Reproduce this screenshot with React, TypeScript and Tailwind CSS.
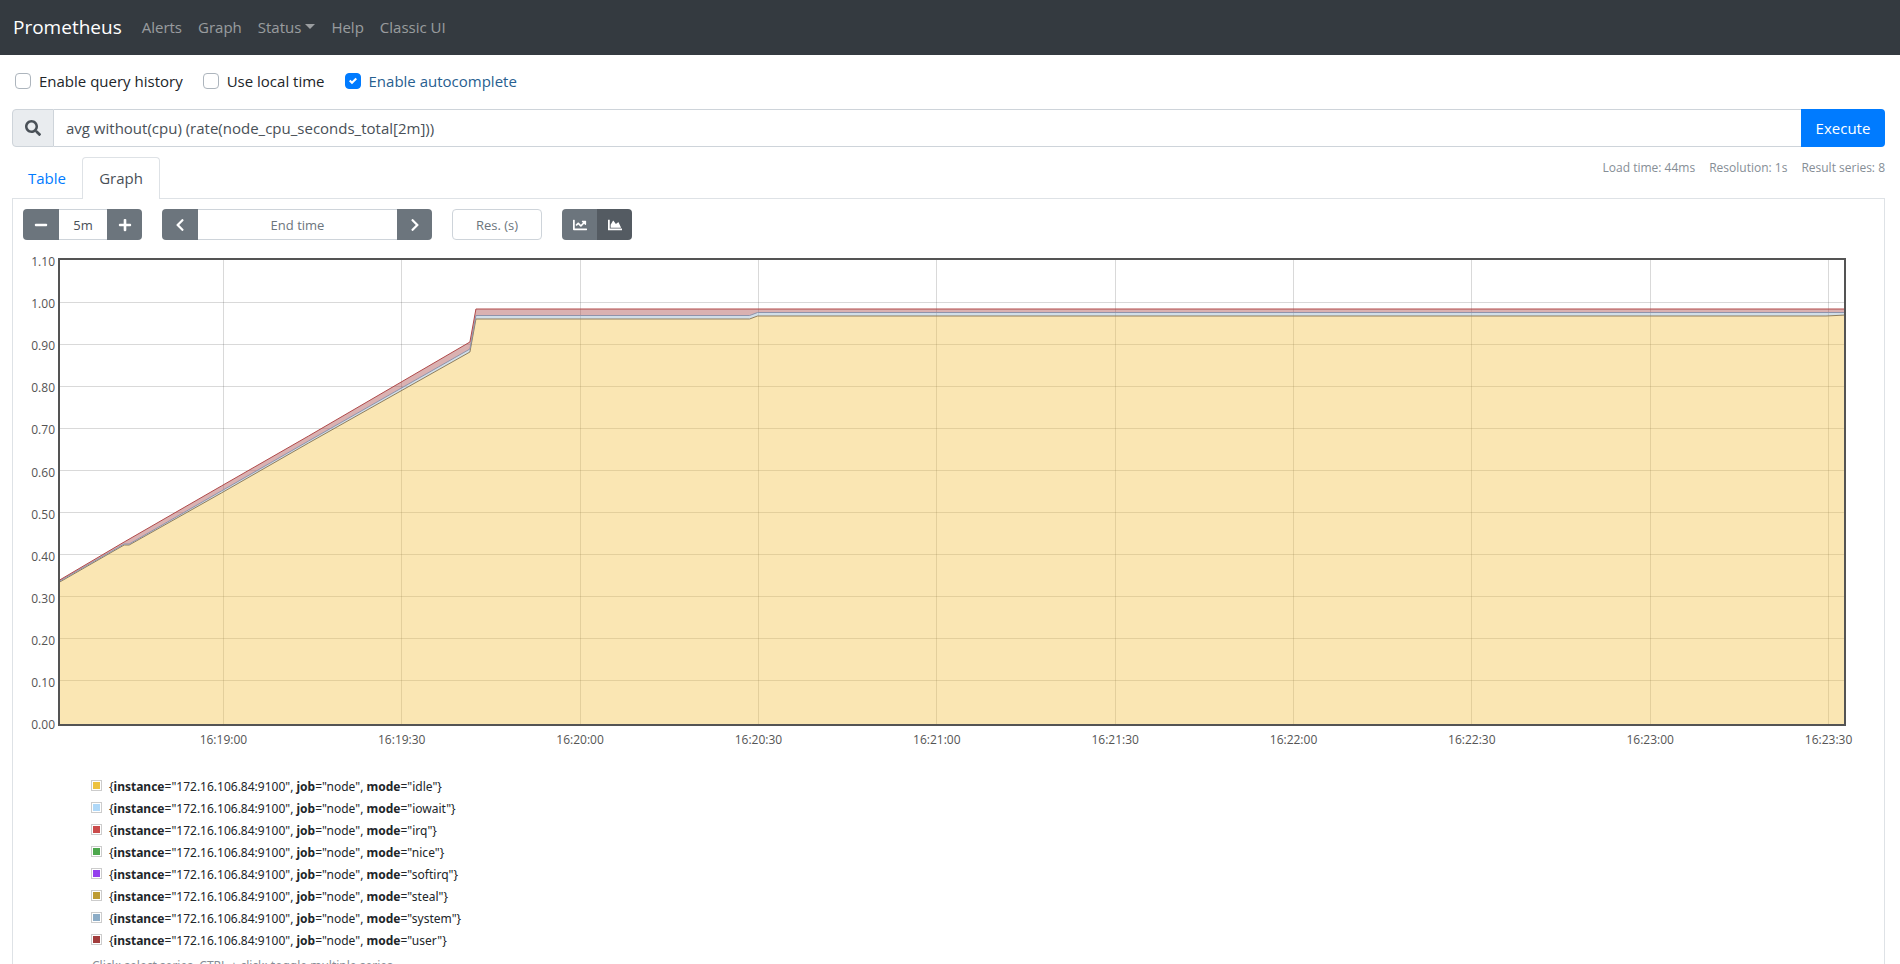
import React from 'react';
import { FaSearch, FaPlus, FaMinus, FaChevronLeft, FaChevronRight, FaChartLine, FaChartArea } from 'react-icons/fa';

const series = [
  { mode: 'idle', color: '#edc240' },
  { mode: 'iowait', color: '#afd8f8' },
  { mode: 'irq', color: '#cb4b4b' },
  { mode: 'nice', color: '#4da74d' },
  { mode: 'softirq', color: '#9440ed' },
  { mode: 'steal', color: '#bd9b33' },
  { mode: 'system', color: '#8cacc6' },
  { mode: 'user', color: '#a23c3c' },
];

const times = ['16:19:00', '16:19:30', '16:20:00', '16:20:30', '16:21:00', '16:21:30', '16:22:00', '16:22:30', '16:23:00', '16:23:30'];
const values = ['1.10', '1.00', '0.90', '0.80', '0.70', '0.60', '0.50', '0.40', '0.30', '0.20', '0.10', '0.00'];

// Plot coordinates, on a 1784 x 464 canvas
const idle = '0,323 66,285 71,285 163,233 250,183 411,92 417,59 690,59 698,56 1764,56 1784,55';
const iowaitTop = '0,322 66,284 71,284 163,231 250,181 411,89 417,55.5 690,55.5 698,52.5 1784,52.5';
const userTop = '0,321 66,282 163,226 250,176 411,82 417,49 1784,49';

const reverse = (points: string) => points.split(' ').reverse().join(' ');

const Checkbox = ({ id, label, checked = false }: { id: string; label: string; checked?: boolean }) => (
  <div className="flex items-center gap-2">
    <span className="relative flex">
      <input
        type="checkbox"
        id={id}
        defaultChecked={checked}
        className="peer size-4 appearance-none rounded border border-[#adb5bd] bg-white checked:border-[#007bff] checked:bg-[#007bff]"
      />
      <svg viewBox="0 0 8 8" className="pointer-events-none absolute top-1 left-1 hidden size-2 peer-checked:block">
        <path fill="#fff" d="M6.564.75l-3.59 3.612-1.538-1.55L0 4.26l2.974 2.99L8 2.193z" />
      </svg>
    </span>
    <label htmlFor={id} className={checked ? 'text-[#286090]' : ''}>
      {label}
    </label>
  </div>
);

const Chart: React.FC = () => (
  <svg className="block h-[468px] w-full overflow-visible text-[12px]" fill="#545454">
    {values.map((value, i) => (
      <text key={value} x={-3} y={8 + i * 42.1} textAnchor="end">
        {value}
      </text>
    ))}
    {times.map((time, i) => (
      <text key={time} x={`${9.25 + i * 9.975}%`} y={486} textAnchor="middle">
        {time}
      </text>
    ))}
    <g stroke="#545454" strokeOpacity={0.22} shapeRendering="crispEdges">
      {times.map((time, i) => (
        <line key={time} x1={`${9.25 + i * 9.975}%`} x2={`${9.25 + i * 9.975}%`} y1={2} y2={466} />
      ))}
      {values.slice(1, -1).map((value, i) => (
        <line key={value} x1="0" x2="100%" y1={44 + i * 42.1} y2={44 + i * 42.1} />
      ))}
    </g>
    <svg y={2} width="100%" height={464} viewBox="0 0 1784 464" preserveAspectRatio="none" fill="none">
      <polygon points={`${idle} 1784,464 0,464`} fill="#f2c040" fillOpacity={0.4} />
      <polygon points={`${iowaitTop} ${reverse(idle)}`} fill="#8cacc6" fillOpacity={0.4} />
      <polygon points={`${userTop} ${reverse(iowaitTop)}`} fill="#a23c3c" fillOpacity={0.4} />
      <polyline points={idle} stroke="#8f7d5c" vectorEffect="non-scaling-stroke" />
      <polyline points={iowaitTop} stroke="#8f93ab" vectorEffect="non-scaling-stroke" />
      <polyline points={userTop} stroke="#b04a4a" vectorEffect="non-scaling-stroke" />
    </svg>
    <g stroke="#545454" strokeWidth={2}>
      <line x1="0" x2="100%" y1={1} y2={1} />
      <line x1="0" x2="100%" y1={467} y2={467} />
      <line x1={1} x2={1} y1={0} y2={468} />
      <svg x="100%" overflow="visible">
        <line x1={-1} x2={-1} y1={0} y2={468} />
      </svg>
    </g>
  </svg>
);

const App: React.FC = () => {
  return (
    <div className="min-h-screen bg-white font-['Open_Sans','Noto_Sans',sans-serif] text-[15px] leading-6 text-[#212529]">
      <nav className="flex h-[55px] items-center bg-[#343a40] px-[13px] pb-[2px]">
        <a href="#" className="mr-5 text-[19px] text-white">Prometheus</a>
        <div className="flex items-center gap-4 text-white/50">
          <a href="#">Alerts</a>
          <a href="#">Graph</a>
          <button type="button" className="flex items-center gap-1">
            Status
            <span className="border-x-5 border-t-5 border-x-transparent border-t-current" />
          </button>
          <a href="#">Help</a>
          <a href="#">Classic UI</a>
        </div>
      </nav>

      <main className="pt-[14px] pr-[15px] pl-3">
        <div className="flex gap-5 px-[3px]">
          <Checkbox id="query-history" label="Enable query history" />
          <Checkbox id="local-time" label="Use local time" />
          <Checkbox id="autocomplete" label="Enable autocomplete" checked />
        </div>

        <div className="mt-4 flex h-[38px]">
          <span className="flex w-[42px] items-center justify-center rounded-l border border-[#ced4da] bg-[#e9ecef] text-[#495057]">
            <FaSearch className="size-4" />
          </span>
          <input
            type="text"
            aria-label="Expression"
            defaultValue="avg without(cpu) (rate(node_cpu_seconds_total[2m]))"
            className="min-w-0 flex-1 border-y border-[#ced4da] px-3 text-[#495057]"
          />
          <button type="button" className="w-[84px] rounded-r bg-[#007bff] text-white">Execute</button>
        </div>

        <div className="mt-[10px] flex items-start justify-between">
          <div className="flex">
            <button type="button" className="h-[41px] w-[70px] text-[#007bff]">Table</button>
            <button type="button" className="relative z-10 -mb-px h-[42px] w-[78px] rounded-t border border-b-0 border-[#dee2e6] bg-white pb-px text-[#495057]">
              Graph
            </button>
          </div>
          <div className="flex gap-[14px] text-[12px] leading-[22px] text-[#868e96]">
            <span>Load time: 44ms</span>
            <span>Resolution: 1s</span>
            <span>Result series: 8</span>
          </div>
        </div>

        <div className="border border-[#dee2e6] px-[10px] pt-[10px]">
          <div className="flex h-[31px] gap-5 text-[13px]">
            <div className="flex">
              <button type="button" aria-label="Decrease range" className="flex w-9 items-center justify-center rounded-l bg-[#6c757d] text-white">
                <FaMinus className="size-[14px]" />
              </button>
              <input type="text" aria-label="Range" defaultValue="5m" className="w-12 border-y border-[#ced4da] text-center text-[#495057]" />
              <button type="button" aria-label="Increase range" className="flex w-[35px] items-center justify-center rounded-r bg-[#6c757d] text-white">
                <FaPlus className="size-[14px]" />
              </button>
            </div>
            <div className="flex">
              <button type="button" aria-label="Earlier" className="flex w-9 items-center justify-center rounded-l bg-[#6c757d] text-white">
                <FaChevronLeft className="size-[14px]" />
              </button>
              <input type="text" aria-label="End time" placeholder="End time" className="w-[199px] border-y border-[#ced4da] text-center placeholder:text-[#6c757d]" />
              <button type="button" aria-label="Later" className="flex w-[35px] items-center justify-center rounded-r bg-[#6c757d] text-white">
                <FaChevronRight className="size-[14px]" />
              </button>
            </div>
            <input type="text" aria-label="Resolution" placeholder="Res. (s)" className="w-[90px] rounded border border-[#ced4da] text-center placeholder:text-[#6c757d]" />
            <div className="flex text-white">
              <button type="button" aria-label="Line graph" className="flex w-[35px] items-center justify-center rounded-l bg-[#6c757d]">
                <FaChartLine className="size-[14px]" />
              </button>
              <button type="button" aria-label="Stacked graph" className="flex w-[35px] items-center justify-center rounded-r bg-[#545b62]">
                <FaChartArea className="size-[14px]" />
              </button>
            </div>
          </div>

          <div className="mt-[18px] pr-7 pl-[35px]">
            <Chart />
          </div>

          <div className="mt-[50px] ml-[68px] font-['Noto_Sans',sans-serif] text-[12px] leading-[22px]">
            {series.map(({ mode, color }) => (
              <button key={mode} type="button" className="flex h-[22px] items-center gap-[7px]">
                <svg viewBox="0 0 11 11" className="mb-1 size-[11px]">
                  <rect x="0.5" y="0.5" width="10" height="10" fill="#fff" stroke="#ccc" />
                  <rect x="2" y="2" width="7" height="7" fill={color} />
                </svg>
                <span>
                  {'{'}<b>instance</b>="172.16.106.84:9100", <b>job</b>="node", <b>mode</b>="{mode}"{'}'}
                </span>
              </button>
            ))}
            <p className="mt-[3px] pl-px text-[#868e96]">Click: select series, CTRL + click: toggle multiple series</p>
          </div>
        </div>
      </main>
    </div>
  );
};

export default App;
